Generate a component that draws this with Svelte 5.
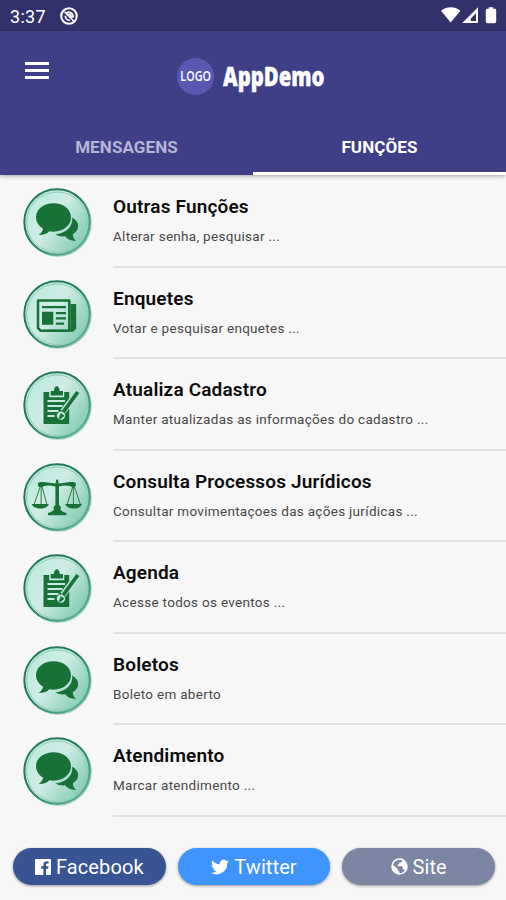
<script lang="ts">
  type IconName = 'chat' | 'news' | 'clipboard' | 'scales'

  let activeTab = $state('FUNÇÕES')

  const tabs = ['MENSAGENS', 'FUNÇÕES']

  const items: { title: string; description: string; icon: IconName }[] = [
    { title: 'Outras Funções', description: 'Alterar senha, pesquisar ...', icon: 'chat' },
    { title: 'Enquetes', description: 'Votar e pesquisar enquetes ...', icon: 'news' },
    {
      title: 'Atualiza Cadastro',
      description: 'Manter atualizadas as informações do cadastro ...',
      icon: 'clipboard'
    },
    {
      title: 'Consulta Processos Jurídicos',
      description: 'Consultar movimentaçoes das ações jurídicas ...',
      icon: 'scales'
    },
    { title: 'Agenda', description: 'Acesse todos os eventos ...', icon: 'clipboard' },
    { title: 'Boletos', description: 'Boleto em aberto', icon: 'chat' },
    { title: 'Atendimento', description: 'Marcar atendimento ...', icon: 'chat' }
  ]
</script>

{#snippet badge(name: IconName)}
  <svg class="badge" viewBox="0 0 90 90" aria-hidden="true">
    <circle cx="42.8" cy="42.8" r="34" fill="#9bcfbc" />
    <circle cx="42" cy="42" r="32.7" fill="url(#badge-fill)" stroke="url(#badge-ring)" stroke-width="2" />
    <circle cx="42" cy="42.3" r="30.3" fill="none" stroke="#8fcdb8" stroke-width="1" />
    {#if name === 'chat'}
      <path
        fill="#187238"
        d="M38.5 23.2C28.7 23.2 21 29.2 21 37.2c0 4.8 2.8 9 7.2 11.5-.8 2.5-2.2 4.5-4.6 6.4 4.7.2 8.3-1.2 10.8-3.8 1.3.3 2.7.4 4.1.4 9.8 0 17.5-6.3 17.5-14.4s-7.7-14.1-17.5-14.1z"
      />
      <path
        fill="#187238"
        d="M57.2 37.5c1.1 8.9-6.2 15.8-16.8 17 2.8 1.6 6.3 2.2 9.6 1.8 2.7 3.2 6.7 4.9 11 4.6-2-1.8-3.1-4.1-3.2-6.7 3.6-2.2 5.5-5.1 5.4-8.5-.1-3.2-2.3-6.1-6-8.2z"
      />
    {:else if name === 'news'}
      <path fill="none" stroke="#187238" stroke-width="2.5" stroke-linejoin="round" d="M23 28.5h31.3v30.3H25.8L23 56z" />
      <path fill="#187238" d="M55.5 32h5.7v24.8l-3 3H27.5v-2h28z" />
      <path fill="#187238" d="M27 34h24v2.3H27zM27 39.8h11.3v13H27zM40.8 40H51v2.3H40.8zM40.8 45.3H51v2.3H40.8zM40.8 50.5H49v2.3h-8.2z" />
    {:else if name === 'clipboard'}
      <path fill="#187238" d="M28.5 29h5.7v5.3h15V29h5v32h-25.7z" />
      <path fill="#187238" d="M35.7 32.5V28h3.2c.1-3 1.4-4.7 2.9-4.7s2.8 1.7 2.9 4.7H48v4.5z" />
      <path fill="none" stroke="#c7e9df" stroke-width="1.8" d="M32.5 38H50M32.5 43h15M32.5 48h11M32.5 53h7" />
      <path fill="none" stroke="#bce3d7" stroke-width="6.2" d="M59 34 48 48.6" />
      <circle cx="46" cy="52.6" r="4.2" fill="#c7e9df" />
      <path fill="none" stroke="#187238" stroke-width="3.8" d="M62.8 29 48.3 49" />
      <path fill="#187238" d="M45.8 50l3.6 2.7-4.2 3.5-1.4-1z" />
    {:else}
      <path fill="#187238" d="M41.3 24.5h1.8l.5 4 10-1.2c3.8-.5 6.3-.2 6.3 2.3 0 2-2.2 2.5-4.3 1.7-3.8-1.3-8.2-.7-11.6.2V50l2 2-.5 3 3.5 2.2 2.4.7v2.4H33v-2.4l2.6-.7 3.3-2.2-.4-3 1.9-2V31.5c-3.8-.9-7.5-1.5-11.5-.2-2.3.8-4.6.4-4.6-1.9 0-2.5 2.5-2.6 6.3-2.1l9.9 1.2z" />
      <circle cx="25.6" cy="29.6" r="2.7" fill="#187238" />
      <circle cx="58.2" cy="29.6" r="2.7" fill="#187238" />
      <path fill="none" stroke="#187238" stroke-width=".9" d="M25.8 30 19 49.8M26.2 30v20M26.6 30 32 49.8M58.3 30 52 49.8M58.4 30v20M58.8 30 65.5 49.8" />
      <path fill="#187238" d="M16.7 49h17.2c-1.6 3.6-4.8 4.6-8.4 4.6-3.8 0-7.1-1.2-8.8-4.6zM50 49h17c-1.6 3.6-4.8 4.6-8.3 4.6-3.7 0-7-1.2-8.7-4.6z" />
    {/if}
  </svg>
{/snippet}

<!-- gradients shared by every badge -->
<svg class="defs" width="0" height="0" aria-hidden="true">
  <linearGradient id="badge-fill" x1=".1" y1=".25" x2=".95" y2=".85">
    <stop offset="0" stop-color="#bfebdf" />
    <stop offset=".38" stop-color="#cfece5" />
    <stop offset="1" stop-color="#7fc9ae" />
  </linearGradient>
  <linearGradient id="badge-ring" x1="0" y1="0" x2="1" y2="1">
    <stop offset="0" stop-color="#24785a" />
    <stop offset=".45" stop-color="#217c60" />
    <stop offset="1" stop-color="#69b99a" />
  </linearGradient>
</svg>

<div class="screen">
  <div class="status-bar">
    <span class="time">3:37</span>
    <svg class="notify" viewBox="0 0 20 20" aria-hidden="true">
      <circle cx="10" cy="10" r="7.8" fill="none" stroke="#fff" stroke-width="2.1" />
      <path fill="none" stroke="#fff" stroke-width="1.6" d="M5.5 5.7 14.6 15M6.3 9.8A4.2 4.2 0 0 0 11 14.2M7.2 7A4.4 4.4 0 0 1 14 11.5M8.3 8.3 11 8.5l2.4 3.3" />
    </svg>
    <div class="system">
      <svg width="56" height="20" viewBox="0 0 56 20" fill="#fff" aria-hidden="true">
        <path d="M0 4.7C5.8.2 13.6.2 19.4 4.7L9.7 16.5z" />
        <path fill-rule="evenodd" d="M21.2 17 37 1.2V17zM35 7.2 29.8 12.4V15H35z" />
        <path d="M47.8 1.2h4.4v1.6h1.6q1.4 0 1.4 1.4v11.4q0 1.6-1.6 1.6h-7.2q-1.6 0-1.6-1.6V4.2q0-1.4 1.4-1.4h1.6z" />
      </svg>
    </div>
  </div>

  <header>
    <div class="toolbar">
      <button class="menu-btn" aria-label="Menu">
        <span></span>
        <span></span>
        <span></span>
      </button>
      <div class="brand">
        <span class="logo"><span>LOGO</span></span>
        <span class="name">AppDemo</span>
      </div>
    </div>
    <nav class="tabs">
      {#each tabs as tab}
        <button class="tab" class:active={activeTab === tab} onclick={() => (activeTab = tab)}>
          {tab}
        </button>
      {/each}
    </nav>
  </header>

  <main>
    {#each items as item}
      <div class="item">
        {@render badge(item.icon)}
        <div class="item-text">
          <h3>{item.title}</h3>
          <p>{item.description}</p>
        </div>
      </div>
    {/each}
  </main>

  <footer>
    <button class="social facebook">
      <svg width="16" height="16" viewBox="0 0 16 16" fill="#fff" aria-hidden="true">
        <path d="M1 0h14q1 0 1 1v14q0 1-1 1h-4V9.8h2.1l.4-2.5H11V5.8c0-.8.4-1.2 1.3-1.2h1.3V2.4l-1.9-.1C9.6 2.3 8.4 3.6 8.4 5.6v1.7H6.2v2.5h2.2V16H1q-1 0-1-1V1q0-1 1-1z" />
      </svg>
      <span>Facebook</span>
    </button>
    <button class="social twitter">
      <svg width="18" height="16" viewBox="0 2 24 20" fill="#fff" aria-hidden="true">
        <path d="M24 4.6a10 10 0 0 1-2.8.8 5 5 0 0 0 2.1-2.7 10 10 0 0 1-3.1 1.2 4.9 4.9 0 0 0-8.4 4.5A14 14 0 0 1 1.7 3.2a4.9 4.9 0 0 0 1.5 6.5 5 5 0 0 1-2.2-.6 4.9 4.9 0 0 0 3.9 4.9 5 5 0 0 1-2.2.1 4.9 4.9 0 0 0 4.6 3.4A10 10 0 0 1 0 19.5 14 14 0 0 0 21.5 7a10 10 0 0 0 2.5-2.4z" />
      </svg>
      <span>Twitter</span>
    </button>
    <button class="social site">
      <svg width="17" height="17" viewBox="0 0 17 17" aria-hidden="true">
        <circle cx="8.5" cy="8.5" r="7.5" fill="none" stroke="#fff" stroke-width="1.6" />
        <path fill="#fff" d="M1.3 6.2 6.8 11v1.4l1.6 1v2.4C3.8 15.9.5 11.5 1.3 6.2zM11 1.4v1.8q0 1.3-1.4 1.3H8.2V6L6.7 6.8v1.4h4.2l.8.8v2.5h1.3l1.2 1.3c3.4-4 2-9.6-3.2-11.4z" />
      </svg>
      <span>Site</span>
    </button>
  </footer>
</div>

<style>
  :global(body) {
    margin: 0;
    background: #f7f7f7;
  }

  .screen {
    width: 506px;
    height: 900px;
    display: flex;
    flex-direction: column;
    overflow: hidden;
    background: #f7f7f7;
    font-family: Roboto, 'Noto Sans', sans-serif;
  }

  .defs {
    position: absolute;
  }

  button {
    border: none;
    padding: 0;
    background: none;
    color: #fff;
    font-family: inherit;
    cursor: pointer;
  }

  .status-bar {
    height: 31px;
    flex-shrink: 0;
    display: flex;
    align-items: center;
    box-sizing: border-box;
    padding: 1px 9px 0 10px;
    background: #33316a;
    color: #fff;
  }

  .time {
    font-size: 18px;
    letter-spacing: 0.3px;
    width: 49px;
  }

  .notify {
    width: 20px;
    height: 20px;
  }

  .system {
    margin-left: auto;
    display: flex;
  }

  header {
    height: 144px;
    flex-shrink: 0;
    display: flex;
    flex-direction: column;
    background: #3e3f86;
    box-shadow: 0 1px 4px rgba(0, 0, 0, 0.35);
    position: relative;
  }

  .toolbar {
    height: 90px;
    display: flex;
    align-items: center;
    padding-left: 25px;
  }

  .menu-btn {
    width: 24px;
    margin-top: -12px;
    display: flex;
    flex-direction: column;
    gap: 4px;
  }

  .menu-btn span {
    height: 3px;
    background: #fff;
  }

  .brand {
    display: flex;
    align-items: center;
    gap: 9px;
    margin-left: 128px;
    color: #fff;
    font-family: 'Open Sans', 'Noto Sans', sans-serif;
    font-weight: 700;
  }

  .logo {
    width: 37px;
    height: 37px;
    border-radius: 50%;
    display: flex;
    align-items: center;
    justify-content: center;
    background: #5858b0;
    font-size: 14.5px;
    font-weight: 600;
    line-height: 1;
  }

  .logo span {
    transform: scaleX(0.74);
  }

  .name {
    font-size: 26px;
    line-height: 1;
    font-weight: 800;
    -webkit-text-stroke: 0.4px #fff;
    transform: scaleX(0.78);
    transform-origin: left;
  }

  .tabs {
    flex: 1;
    display: flex;
  }

  .tab {
    flex: 1;
    padding-top: 1px;
    font-size: 17px;
    letter-spacing: 0.1px;
    font-weight: 700;
    color: #b5b6d6;
    border-bottom: 3px solid transparent;
  }

  .tab.active {
    color: #fff;
    border-bottom-color: #fff;
  }

  main {
    flex-shrink: 0;
    display: flex;
    flex-direction: column;
    padding-top: 1px;
  }

  .item {
    height: 91.5px;
    display: flex;
    padding-left: 15px;
  }

  .badge {
    width: 90px;
    height: 90px;
    margin-top: 4px;
    flex-shrink: 0;
  }

  .item-text {
    flex: 1;
    margin-left: 8px;
    border-bottom: 2px solid #e0e0e0;
  }

  h3 {
    margin: 19px 0 0;
    font-size: 19px;
    line-height: 24px;
    font-weight: 600;
    letter-spacing: 0.17px;
    color: #0c0c0c;
  }

  p {
    margin: 8px 0 0;
    font-size: 13.5px;
    line-height: 18px;
    letter-spacing: 0.3px;
    color: #484848;
  }

  footer {
    display: flex;
    gap: 12px;
    margin-top: auto;
    padding: 0 11px 15px 13px;
  }

  .social {
    flex: 1;
    height: 37px;
    border-radius: 19px;
    display: flex;
    align-items: center;
    justify-content: center;
    gap: 5px;
    font-size: 20px;
    letter-spacing: 0.1px;
    box-shadow: 0 1px 3px rgba(0, 0, 0, 0.4);
  }

  .facebook {
    background: #385593;
  }

  .twitter {
    background: #3f95fd;
  }

  .site {
    background: #7c86a2;
  }
</style>
